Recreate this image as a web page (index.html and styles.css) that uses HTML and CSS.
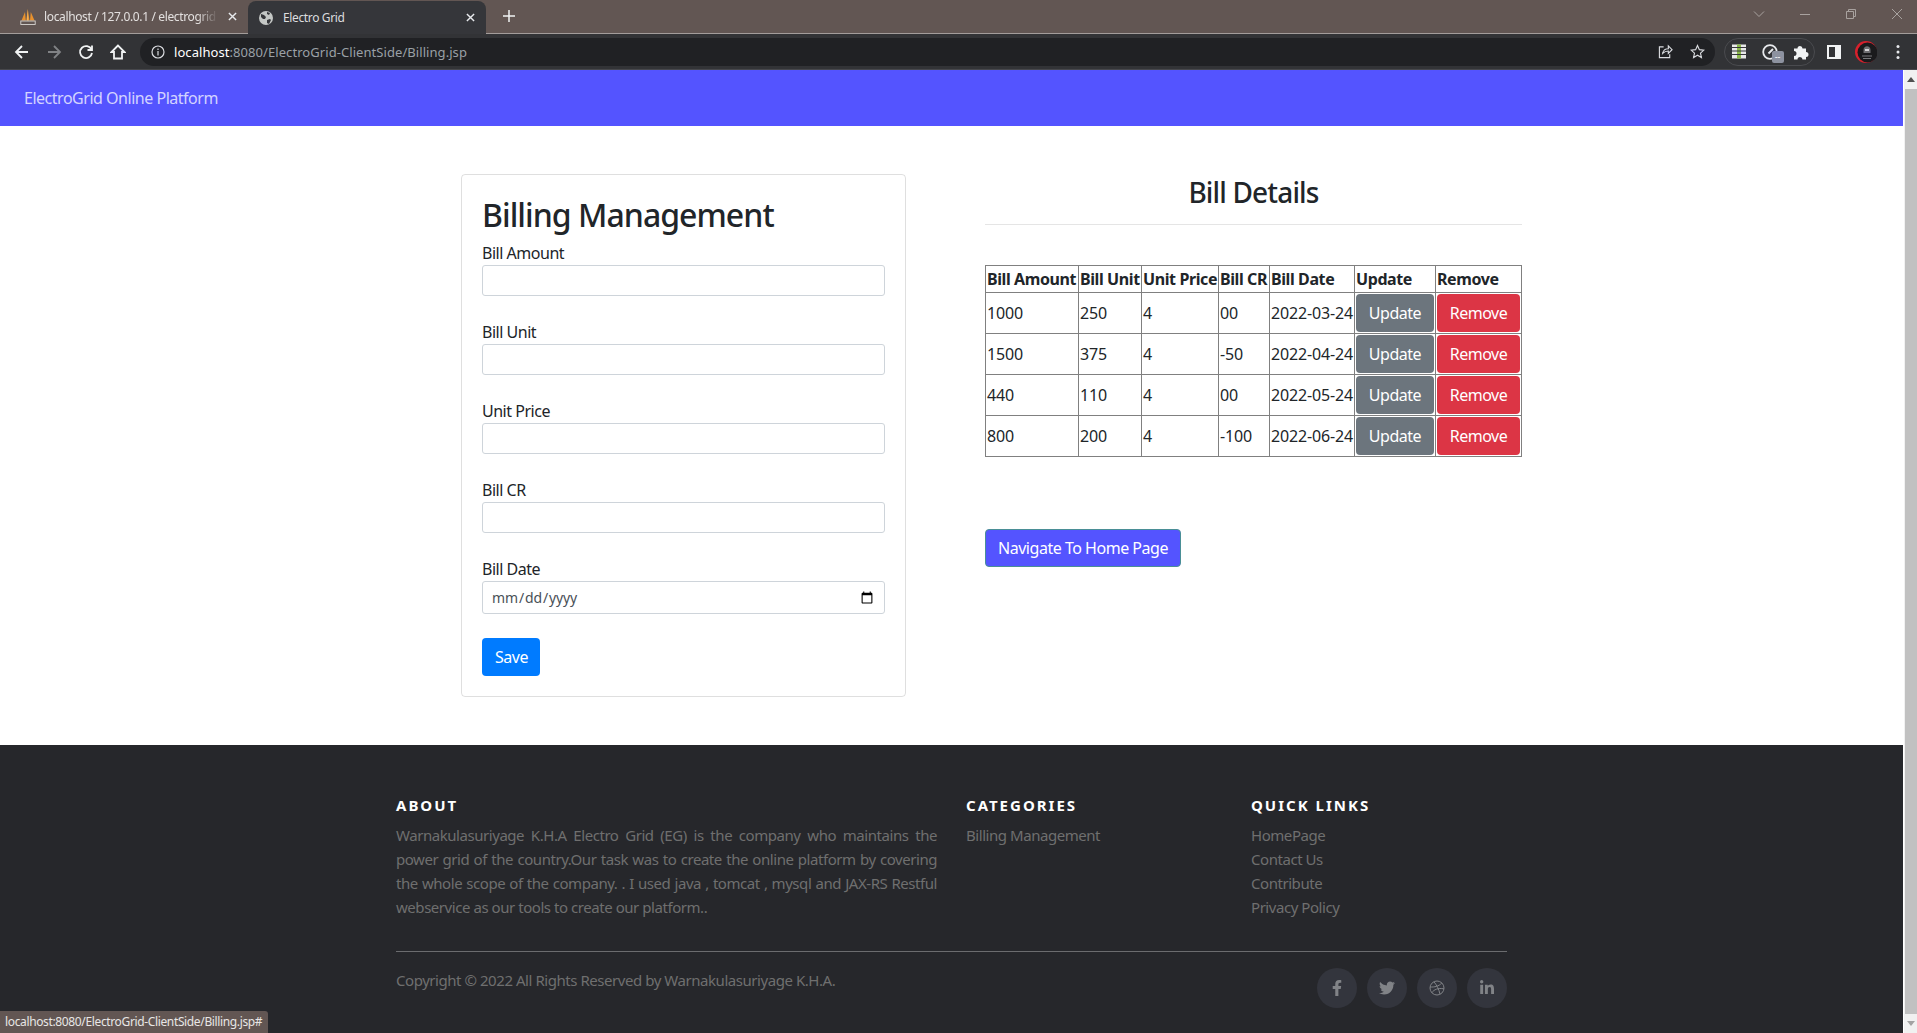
FILE: index.html
```html
<!DOCTYPE html>
<html lang="en">
<head>
    <meta charset="UTF-8">
    <title>Electro Grid</title>
    <link rel="stylesheet" href="styles.css">
</head>
<body>
    <!-- Browser tabs -->
    <div class="tabstrip">
        <div class="tab">
            <svg class="favicon" viewBox="0 0 16 16"><path d="M1.500 11.500 5 3l.8 8.500zM6.300 11.500 7.800 0l1.700 11.500zM10 11.500 10.800 3l3.700 8.500z" fill="#e8912d"/><path d="M7.800 0 7.300 11.500h1z" fill="#f7c873"/><rect x=".8" y="12" width="14.400" height="3.500" fill="none" stroke="#d8d4d0" stroke-width=".9"/></svg>
            <span class="tab-title tab-fade">localhost / 127.0.0.1 / electrogrid</span>
            <svg class="tab-close" viewBox="0 0 10 10"><path d="M1 1l8 8M9 1 1 9"/></svg>
        </div>
        <div class="tab tab-active">
            <svg class="favicon" viewBox="0 0 16 16"><circle cx="8" cy="8" r="7" fill="#c4c7c5"/><path d="M3 4l3 1 2 2-1 2-2 0-2-2zM9 10l3-1 1 1-2 4-2-1zM9 2l3 1-1 2-2-1z" fill="#35363a"/></svg>
            <span class="tab-title">Electro Grid</span>
            <svg class="tab-close" viewBox="0 0 10 10"><path d="M1 1l8 8M9 1 1 9"/></svg>
        </div>
        <svg class="new-tab" viewBox="0 0 12 12"><path d="M6 0v12M0 6h12"/></svg>
        <div class="window-controls">
            <svg viewBox="0 0 12 12"><path d="M1 3.500l5 5 5-5"/></svg>
            <svg viewBox="0 0 12 12"><path d="M1 6.500h10"/></svg>
            <svg viewBox="0 0 12 12"><path d="M1.500 3.500h7v7h-7zM3.500 3.500v-2h7v7h-2"/></svg>
            <svg viewBox="0 0 12 12"><path d="M1 1l10 10M11 1 1 11"/></svg>
        </div>
    </div>

    <!-- Browser toolbar -->
    <div class="toolbar">
        <svg class="tool" viewBox="0 0 16 16"><path d="M14 8H2.500M8 2 2 8l6 6"/></svg>
        <svg class="tool tool-off" viewBox="0 0 16 16"><path d="M2 8h11.500M8 2l6 6-6 6"/></svg>
        <svg class="tool" viewBox="0 0 16 16"><path d="M13.500 5.500A6 6 0 1 0 14 9M14 1.500v4.500H9.500"/></svg>
        <svg class="tool" viewBox="0 0 16 16"><path d="M8 1.500 1.500 8H4v6.500h8V8h2.500z"/></svg>
        <div class="omnibox">
            <svg class="info" viewBox="0 0 14 14"><circle cx="7" cy="7" r="6"/><path d="M7 6v4.500M7 3.500v1.500"/></svg>
            <span class="url"><b>localhost</b>:8080/ElectroGrid-ClientSide/Billing.jsp</span>
            <svg class="omni-icon" viewBox="0 0 16 16"><path d="M6 3H1.500v11.500h11V11M5 10c.5-3 3-5 6-5V2l4 4-4 4V7.500c-2.500 0-4.500 1-6 2.500z"/></svg>
            <svg class="omni-icon" viewBox="0 0 16 16"><path d="M8 1.500l2 4.500 4.800.5-3.600 3.200 1 4.800L8 12l-4.200 2.500 1-4.800L1.200 6.500 6 6z"/></svg>
        </div>
        <div class="ext-pill">
            <svg class="ext ext-grid" viewBox="0 0 14 14"><rect width="14" height="14" fill="#e8e8e8"/><rect x="5" width="4" height="14" fill="#8bb84a"/><path d="M0 3h14M0 6.500h14M0 10h14" stroke="#35363a"/></svg>
            <span class="gauge">
                <svg class="ext" viewBox="0 0 16 16"><circle cx="8" cy="8" r="6.800" fill="none" stroke="#e8eaed" stroke-width="1.800"/><path d="M6.500 9.500 11 5" stroke="#e8eaed" stroke-width="2"/></svg>
                <span class="badge">--</span>
            </span>
            <svg class="ext" viewBox="0 0 16 16"><path fill="#f1f3f4" d="M1 4.500h3.500a2.500 2.500 0 0 1 5 0H13V8a2.500 2.500 0 0 1 0 5v2.500H9.500a2.500 2.500 0 0 0-5 0H1V12a2.500 2.500 0 0 0 0-5z"/></svg>
        </div>
        <svg class="panel" viewBox="0 0 14 14"><path fill="#f1f3f4" d="M0 0h14v14H0zM2 2v10h6V2z" fill-rule="evenodd"/></svg>
        <svg class="avatar" viewBox="0 0 22 22"><circle cx="11" cy="11" r="11" fill="#d8202c"/><circle cx="12.500" cy="11.500" r="10" fill="#1a1a1c"/><path d="M8.500 9c0-5 7-5 7 0v3h-7z" fill="#6f6f72"/><path d="M10 8h4v2h-4z" fill="#d5d5d7"/><path d="M7 15h10M8 17.500h8" stroke="#77777a"/></svg>
        <svg class="kebab" viewBox="0 0 4 16"><circle cx="2" cy="2.500" r="1.500"/><circle cx="2" cy="8" r="1.500"/><circle cx="2" cy="13.500" r="1.500"/></svg>
    </div>

    <div class="viewport">
        <div class="page">
            <div class="navbar">ElectroGrid Online Platform</div>

            <div class="main">
                <!-- Formulario -->
                <form class="card">
                    <h2>Billing Management</h2>
                    <label>Bill Amount</label>
                    <input class="form-control" type="text">
                    <label>Bill Unit</label>
                    <input class="form-control" type="text">
                    <label>Unit Price</label>
                    <input class="form-control" type="text">
                    <label>Bill CR</label>
                    <input class="form-control" type="text">
                    <label>Bill Date</label>
                    <input class="form-control form-date" type="date">
                    <button class="btn btn-save" type="button">Save</button>
                </form>

                <!-- Tabla -->
                <div class="details">
                    <h3>Bill Details</h3>
                    <hr>
                    <table>
                        <colgroup>
                            <col class="c-amount"><col class="c-unit"><col class="c-price"><col class="c-cr"><col class="c-date"><col class="c-update"><col class="c-remove">
                        </colgroup>
                        <tr>
                            <th>Bill Amount</th><th>Bill Unit</th><th>Unit Price</th><th>Bill CR</th><th>Bill Date</th><th>Update</th><th>Remove</th>
                        </tr>
                        <tr>
                            <td>1000</td><td>250</td><td>4</td><td>00</td><td>2022-03-24</td>
                            <td><button class="btn btn-update">Update</button></td>
                            <td><button class="btn btn-remove">Remove</button></td>
                        </tr>
                        <tr>
                            <td>1500</td><td>375</td><td>4</td><td>-50</td><td>2022-04-24</td>
                            <td><button class="btn btn-update">Update</button></td>
                            <td><button class="btn btn-remove">Remove</button></td>
                        </tr>
                        <tr>
                            <td>440</td><td>110</td><td>4</td><td>00</td><td>2022-05-24</td>
                            <td><button class="btn btn-update">Update</button></td>
                            <td><button class="btn btn-remove">Remove</button></td>
                        </tr>
                        <tr>
                            <td>800</td><td>200</td><td>4</td><td>-100</td><td>2022-06-24</td>
                            <td><button class="btn btn-update">Update</button></td>
                            <td><button class="btn btn-remove">Remove</button></td>
                        </tr>
                    </table>
                    <button class="btn btn-home">Navigate To Home Page</button>
                </div>
            </div>

            <footer class="footer">
                <div class="footer-cols">
                    <div class="col-about">
                        <h6>About</h6>
                        <p>Warnakulasuriyage K.H.A Electro Grid (EG) is the company who maintains the power grid of the country.Our task was to create the online platform by covering the whole scope of the company. . I used java , tomcat , mysql and JAX-RS Restful webservice as our tools to create our platform..</p>
                    </div>
                    <div class="col-links">
                        <h6>Categories</h6>
                        <ul>
                            <li>Billing Management</li>
                        </ul>
                    </div>
                    <div class="col-links">
                        <h6>Quick Links</h6>
                        <ul>
                            <li>HomePage</li>
                            <li>Contact Us</li>
                            <li>Contribute</li>
                            <li>Privacy Policy</li>
                        </ul>
                    </div>
                </div>
                <hr>
                <div class="footer-bottom">
                    <p>Copyright © 2022 All Rights Reserved by Warnakulasuriyage K.H.A.</p>
                    <div class="social">
                        <a><svg viewBox="0 0 320 512"><path d="M279.14 288l14.22-92.66h-88.91v-60.13c0-25.35 12.42-50.06 52.24-50.06h40.42V6.26S260.43 0 225.36 0c-73.22 0-121.08 44.38-121.08 124.72v70.62H22.89V288h81.39v224h100.17V288z"/></svg></a>
                        <a><svg viewBox="0 0 512 512"><path d="M459.37 151.716c.325 4.548.325 9.097.325 13.645 0 138.72-105.583 298.558-298.558 298.558-59.452 0-114.68-17.219-161.137-47.106 8.447.974 16.568 1.299 25.34 1.299 49.055 0 94.213-16.568 130.274-44.832-46.132-.975-84.792-31.188-98.112-72.772 6.498.974 12.995 1.624 19.818 1.624 9.421 0 18.843-1.3 27.614-3.573-48.081-9.747-84.143-51.98-84.143-102.985v-1.299c13.969 7.797 30.214 12.67 47.431 13.319-28.264-18.843-46.781-51.005-46.781-87.391 0-19.492 5.197-37.36 14.294-52.954 51.655 63.675 129.3 105.258 216.365 109.807-1.624-7.797-2.599-15.918-2.599-24.04 0-57.828 46.782-104.934 104.934-104.934 30.213 0 57.502 12.67 76.67 33.137 23.715-4.548 46.456-13.32 66.599-25.34-7.798 24.366-24.366 44.833-46.132 57.827 21.117-2.273 41.584-8.122 60.426-16.243-14.292 20.791-32.161 39.308-52.628 54.253z"/></svg></a>
                        <a><svg class="dribbble" viewBox="0 0 16 16"><circle cx="8" cy="8" r="7"/><path d="M5 1.800c2.500 3 5 7.500 6 12.400M1.100 7c4.500.2 8.500-.5 11.700-4M2.800 12.700C5 9.500 9 7.800 14.900 8.800"/></svg></a>
                        <a><svg viewBox="0 0 448 512"><path d="M100.280 448H7.400V148.900h92.880zM53.790 108.100C24.090 108.100 0 83.500 0 53.800a53.790 53.790 0 0 1 107.580 0c0 29.700-24.100 54.300-53.790 54.300zM447.900 448h-92.680V302.400c0-34.700-.7-79.200-48.290-79.200-48.290 0-55.690 37.700-55.690 76.700V448h-92.780V148.900h89.080v40.800h1.300c12.400-23.500 42.690-48.300 87.880-48.300 94 0 111.280 61.900 111.280 142.300V448z"/></svg></a>
                    </div>
                </div>
            </footer>
        </div>

        <div class="scrollbar">
            <span class="arrow-up"></span>
            <span class="thumb"></span>
            <span class="arrow-down"></span>
        </div>
    </div>

    <div class="status">localhost:8080/ElectroGrid-ClientSide/Billing.jsp#</div>
</body>
</html>
```

FILE: styles.css
```css
* {
    box-sizing: border-box;
    letter-spacing: -0.03em; /* Noto Sans runs wider than the original font */
}

body {
    margin: 0;
    height: 100vh;
    overflow: hidden;
    display: flex;
    flex-direction: column;
    background-color: #fff;
    color: #212529;
    font-family: "Noto Sans", sans-serif;
    font-size: 16px;
}

/* Browser tabs */
.tabstrip {
    height: 34px;
    flex: none;
    display: flex;
    align-items: flex-end;
    background-color: #625653;
    border-bottom: 1px solid #a39d9b;
    font-size: 12px;
}

.tab {
    width: 248px;
    height: 33px;
    display: flex;
    align-items: center;
    padding: 0 11px 0 20px;
    color: #e3e0df;
}

.tab-active {
    width: 238px;
    height: 33px;
    margin-bottom: -1px;
    padding-left: 10px;
    background-color: #35363a;
    border-radius: 8px 8px 0 0;
    color: #dcdddf;
}

.favicon {
    width: 16px;
    height: 16px;
    flex: none;
}

.tab-title {
    flex: 1;
    margin-left: 8px;
    overflow: hidden;
    white-space: nowrap;
}

.tab-active .tab-title {
    margin-left: 9px;
}

.tab-fade {
    margin-right: 10px;
    -webkit-mask-image: linear-gradient(to right, #000 88%, transparent);
    mask-image: linear-gradient(to right, #000 88%, transparent);
}

.tab-close {
    width: 9px;
    height: 9px;
    flex: none;
    fill: none;
    stroke: #e8eaed;
    stroke-width: 1.6;
}

.new-tab {
    width: 12px;
    height: 12px;
    margin: 0 0 11px 17px;
    fill: none;
    stroke: #f1f3f4;
    stroke-width: 1.5;
}

.window-controls {
    margin: 0 14px 13px auto;
    display: flex;
    gap: 34px;
}

.window-controls svg {
    width: 12px;
    height: 12px;
    fill: none;
    stroke: #a8a29f;
    stroke-width: 1;
}

/* Browser toolbar */
.toolbar {
    height: 36px;
    flex: none;
    display: flex;
    align-items: center;
    padding: 0 0 0 14px;
    background-color: #323336;
    border-bottom: 1px solid #47484c;
}

.tool {
    width: 16px;
    height: 16px;
    margin-right: 16px;
    flex: none;
    fill: none;
    stroke: #f1f3f4;
    stroke-width: 1.8;
}

.tool-off {
    stroke: #808285;
}

.omnibox {
    width: 1575px;
    height: 28px;
    margin-left: -2px;
    flex: none;
    display: flex;
    align-items: center;
    padding: 0 10px 0 11px;
    background-color: #202124;
    border-radius: 14px;
    font-size: 13px;
    color: #9aa0a6;
}

.info {
    width: 14px;
    height: 14px;
    fill: none;
    stroke: #dadce0;
    stroke-width: 1.2;
}

.url {
    flex: 1;
    margin-left: 9px;
    letter-spacing: 0.005em;
}

.url b {
    font-weight: 400;
    color: #fff;
    letter-spacing: 0.005em;
}

.omni-icon {
    width: 15px;
    height: 15px;
    margin-left: 17px;
    fill: none;
    stroke: #dadce0;
    stroke-width: 1.2;
}

.ext-pill {
    width: 91px;
    height: 28px;
    margin-left: 9px;
    flex: none;
    display: flex;
    align-items: center;
    justify-content: space-between;
    padding: 0 5px 0 7px;
    border: 1px solid #4a4b4f;
    border-radius: 14px;
}

.ext {
    width: 16px;
    height: 16px;
    display: block;
}

.ext-grid {
    width: 14px;
    height: 15px;
}

.gauge {
    position: relative;
    display: block;
}

.badge {
    position: absolute;
    top: 7px;
    left: 10px;
    width: 12px;
    height: 12px;
    background-color: #8d92a0;
    border-radius: 2px;
    color: #fff;
    font-size: 9px;
    line-height: 11px;
    text-align: center;
}

.panel {
    width: 14px;
    height: 14px;
    margin-left: 12px;
    flex: none;
}

.avatar {
    width: 22px;
    height: 22px;
    margin-left: 14px;
    flex: none;
}

.kebab {
    width: 4px;
    height: 16px;
    margin-left: 19px;
    flex: none;
    fill: #e8eaed;
}

/* Page */
.viewport {
    flex: 1;
    min-height: 0;
    display: flex;
}

.page {
    flex: 1;
    min-width: 0;
    overflow: hidden;
}

.navbar {
    height: 56px;
    padding: 16px 24px;
    background-color: #5454ff;
    color: rgba(255, 255, 255, 0.75);
    line-height: 24px;
}

.main {
    display: flex;
    gap: 79px;
    padding: 48px 0 48px 461px;
}

.card {
    width: 445px;
    padding: 20px;
    border: 1px solid rgba(0, 0, 0, 0.125);
    border-radius: 4px;
}

h2 {
    margin: 0 0 7px;
    padding-top: 1px;
    font-size: 32px;
    font-weight: 500;
    line-height: 38px;
}

label {
    display: block;
    line-height: 24px;
}

.form-control {
    display: block;
    width: 100%;
    height: 31px;
    margin-bottom: 24px;
    padding: 4px 8px;
    border: 1px solid #ced4da;
    border-radius: 3px;
    background-color: #fff;
    color: #495057;
    font-family: inherit;
    font-size: 14px;
}

.form-date {
    height: 33px;
    letter-spacing: -0.01em;
}

.btn {
    height: 38px;
    padding: 0 12px;
    border: 1px solid transparent;
    border-radius: 4px;
    color: #fff;
    font-family: inherit;
    font-size: 16px;
    cursor: pointer;
}

.btn-save {
    width: 58px;
    background-color: #007bff;
}

.details {
    width: 537px;
}

h3 {
    margin: 0;
    font-size: 28px;
    font-weight: 500;
    line-height: 36px;
    text-align: center;
}

hr {
    margin: 14px 0 40px;
    border: none;
    border-top: 1px solid rgba(0, 0, 0, 0.1);
}

/* Tabla de facturas */
table {
    width: 536px;
    table-layout: fixed;
    border-collapse: collapse;
    line-height: 24px;
}

.c-amount { width: 93px; }
.c-unit { width: 63px; }
.c-price { width: 77px; }
.c-cr { width: 51px; }
.c-date { width: 85px; }
.c-update { width: 81px; }
.c-remove { width: 86px; }

th, td {
    padding: 1px;
    border: 1px solid #808080;
    text-align: left;
    white-space: nowrap;
}

th {
    font-weight: 700;
    letter-spacing: -0.025em;
}

td {
    letter-spacing: -0.01em;
}

td .btn {
    display: block;
    width: 100%;
    padding: 0;
}

.btn-update {
    background-color: #6c757d;
}

.btn-remove {
    background-color: #dc3545;
}

.btn-home {
    width: 196px;
    margin-top: 72px;
    padding: 0;
    background-color: #5454ff;
    border-color: #4a8f96;
}

/* Footer */
.footer {
    height: 288px;
    padding: 49px 396px 0;
    background-color: #26272b;
    color: #6f6f6f;
    font-size: 15px;
}

.footer-cols {
    display: grid;
    grid-template-columns: 570px 285px 256px;
    height: 157px;
}

h6 {
    margin: 0 0 7px;
    color: #fff;
    font-size: 15px;
    font-weight: 700;
    line-height: 22px;
    letter-spacing: 2px;
    text-transform: uppercase;
}

.col-about p {
    width: 541px;
    margin: 0;
    line-height: 24px;
    text-align: justify;
}

ul {
    margin: 0;
    padding: 0;
    list-style: none;
    line-height: 24px;
}

.footer hr {
    margin: 0;
    border-top-color: #6b6c6f;
}

.footer-bottom {
    display: flex;
    justify-content: space-between;
    padding-top: 16px;
}

.footer-bottom p {
    margin: 0;
    line-height: 24px;
}

.social {
    display: flex;
    gap: 10px;
}

.social a {
    width: 40px;
    height: 40px;
    display: flex;
    align-items: center;
    justify-content: center;
    background-color: #33353d;
    border-radius: 50%;
}

.social svg {
    width: 16px;
    height: 16px;
    fill: #818387;
}

.social .dribbble {
    fill: none;
    stroke: #818387;
    stroke-width: 1;
}

/* Scrollbar */
.scrollbar {
    width: 14px;
    flex: none;
    display: flex;
    flex-direction: column;
    align-items: center;
    padding-left: 1px;
    background-color: #f1f1f1;
    border-left: 1px solid #fff;
}

.arrow-up, .arrow-down {
    display: block;
    margin-top: 7px;
    border-left: 4px solid transparent;
    border-right: 4px solid transparent;
}

.arrow-up {
    height: 0;
    margin-bottom: 7px;
    border-bottom: 5px solid #505050;
}

.arrow-down {
    height: 0;
    margin-bottom: 7px;
    border-top: 5px solid #a3a3a3;
}

.thumb {
    width: 100%;
    flex: 1;
    background-color: #c1c1c1;
}

/* Status bubble over the page */
.status {
    position: absolute;
    left: 0;
    bottom: 0;
    height: 22px;
    padding: 0 6px 0 5px;
    background-color: #625653;
    border-radius: 0 3px 0 0;
    color: #e8e6e5;
    font-size: 12px;
    line-height: 22px;
}
```
